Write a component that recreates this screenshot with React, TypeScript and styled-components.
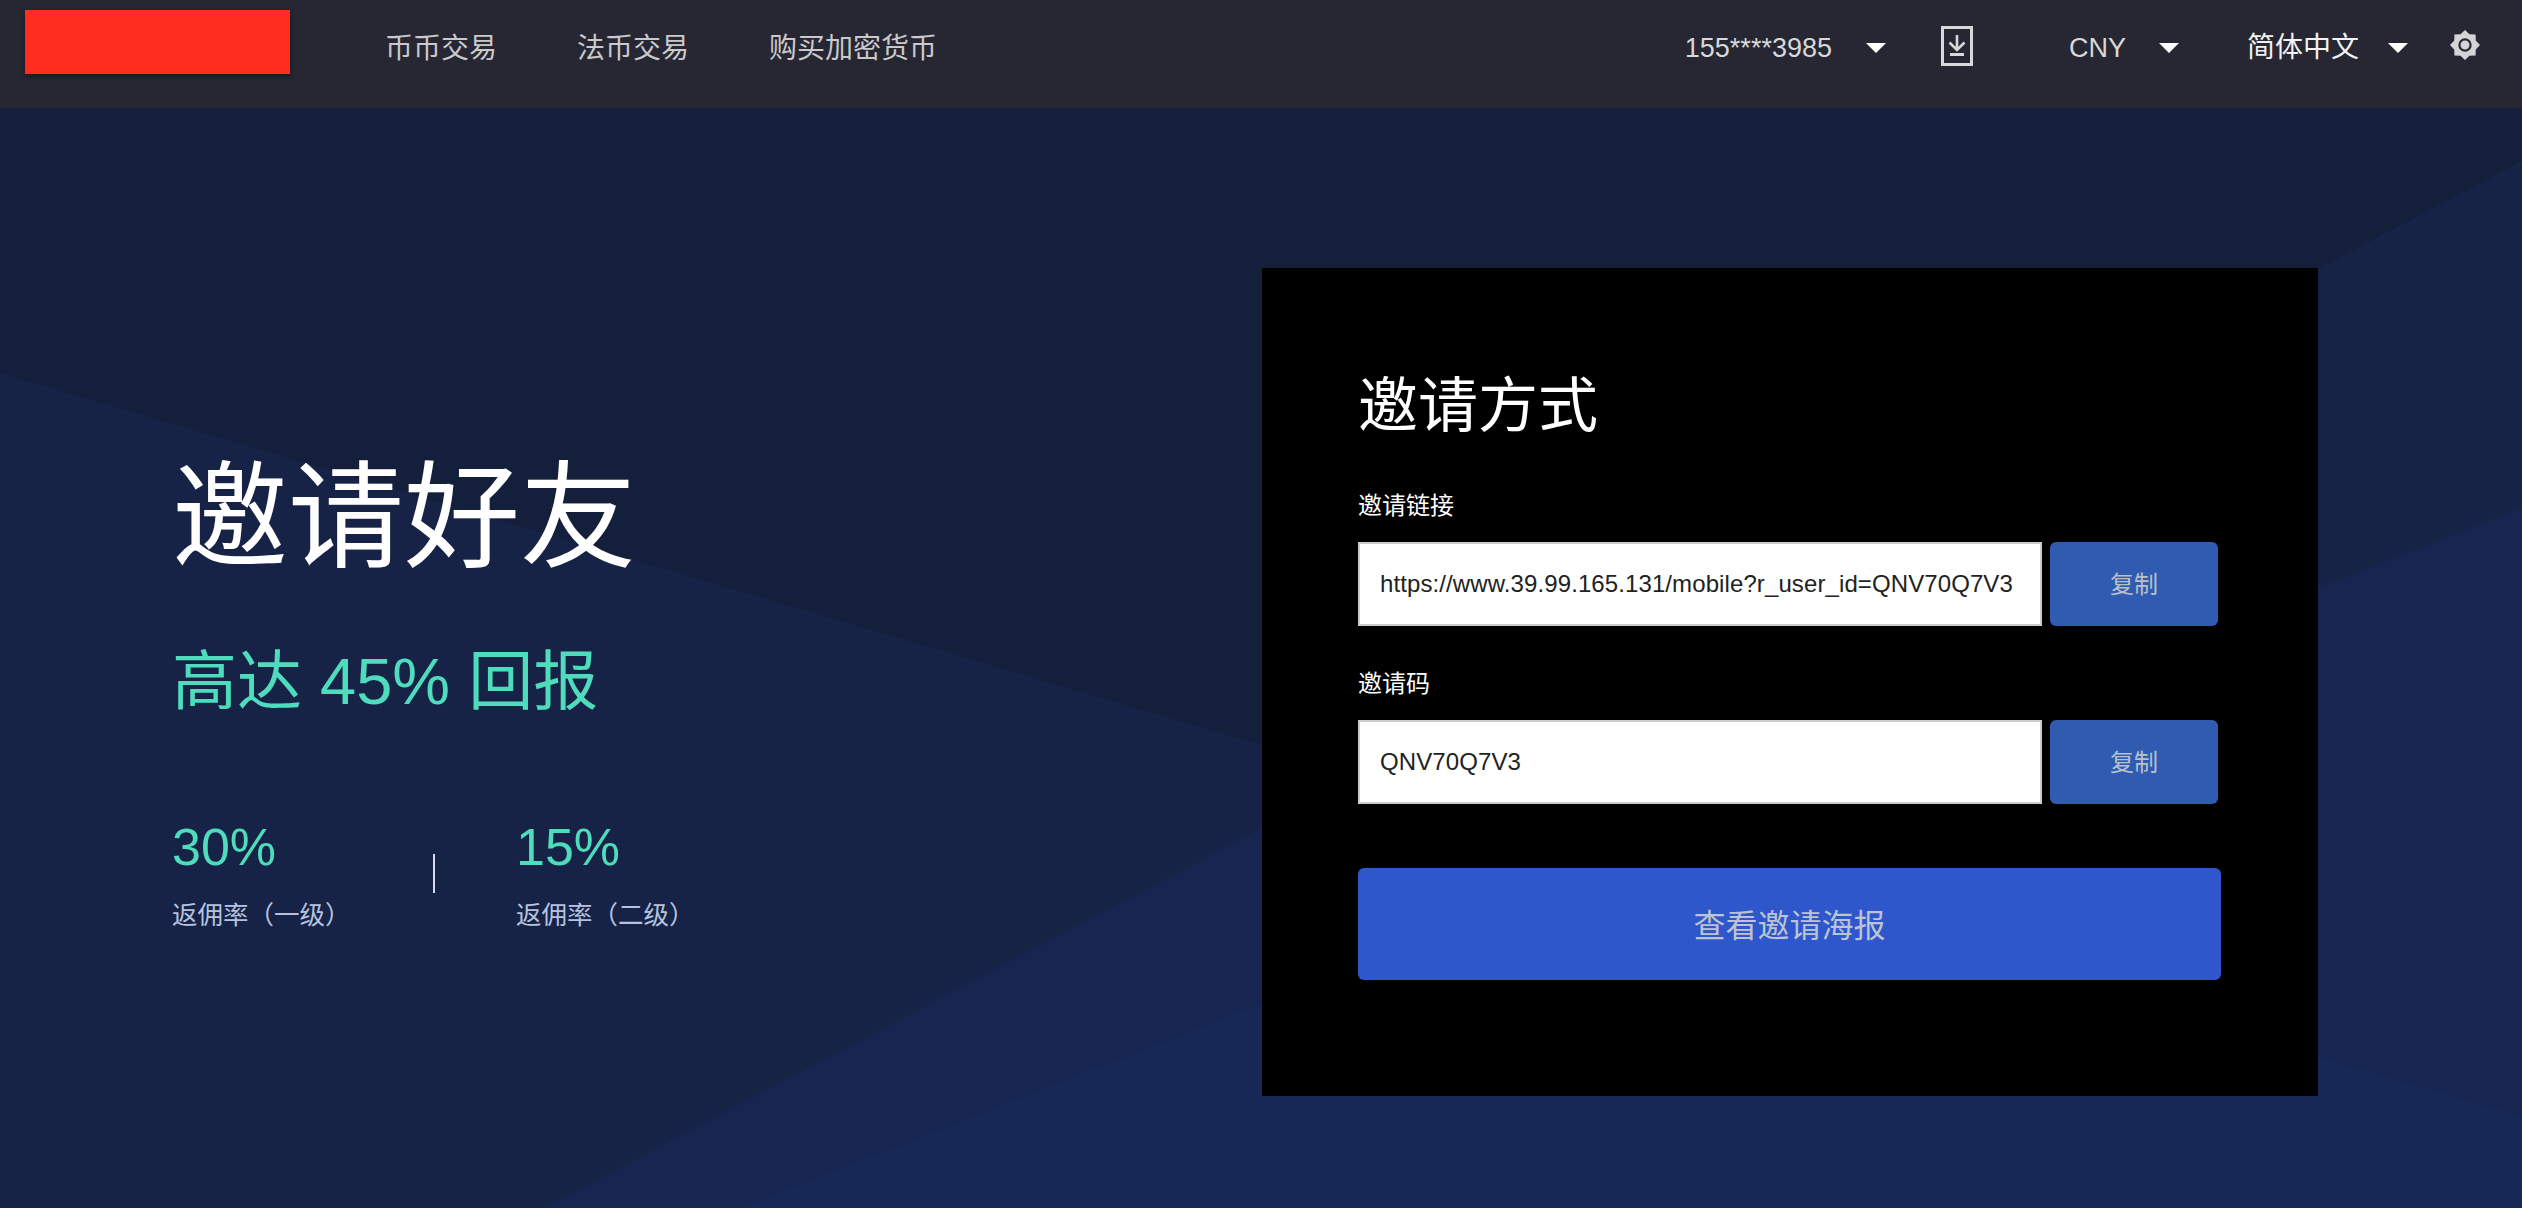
import React from "react";
import styled, { createGlobalStyle } from "styled-components";

const Global = createGlobalStyle`
  html, body { margin: 0; padding: 0; background: #141f3b; }
  body { font-family: "Liberation Sans", "Noto Sans CJK SC", sans-serif; overflow: hidden; }
  * { box-sizing: border-box; }
`;

const Page = styled.div`
  width: 2522px;
  height: 1208px;
  display: flex;
  flex-direction: column;
  overflow: hidden;
`;

const Header = styled.header`
  height: 108px;
  flex: none;
  display: flex;
  align-items: center;
  justify-content: space-between;
  padding: 0 42px 12px 25px;
  background: #262733;
`;

const HeaderLeft = styled.div`
  display: flex;
  align-items: center;
`;

const Logo = styled.div`
  width: 265px;
  height: 64px;
  margin: -12px 95px 0 0;
  background: #ff2d20;
  box-shadow: 0 2px 5px rgba(0, 0, 0, 0.45);
`;

const Nav = styled.nav`
  display: flex;
  gap: 80px;
  padding-top: 2px;
`;

const NavLink = styled.a`
  font-size: 28px;
  line-height: 32px;
  color: #c9c9cc;
`;

const HeaderRight = styled.div`
  display: flex;
  align-items: center;
`;

const Selector = styled.div<{ $after: number; $gap: number; $bright?: boolean }>`
  display: flex;
  align-items: center;
  gap: ${(p) => p.$gap}px;
  margin-right: ${(p) => p.$after}px;
  font-size: ${(p) => (p.$bright ? 28 : 27)}px;
  line-height: 32px;
  color: ${(p) => (p.$bright ? "#f2f2f2" : "#d8d8d8")};
`;

const Caret = styled.span`
  width: 0;
  height: 0;
  border-left: 10px solid transparent;
  border-right: 10px solid transparent;
  border-top: 10px solid #fff;
`;

const IconSlot = styled.svg<{ $after?: number; $up: number }>`
  display: block;
  flex: none;
  margin-right: ${(p) => p.$after ?? 0}px;
  margin-top: ${(p) => p.$up}px;
`;

const Hero = styled.main`
  position: relative;
  flex: 1;
  display: flex;
  padding: 160px 204px 112px 172px;
  background: #141f3b;
`;

const Backdrop = styled.svg`
  position: absolute;
  inset: 0;
  width: 100%;
  height: 100%;
`;

const Intro = styled.section`
  position: relative;
  flex: 1;
  padding-top: 193px;
`;

const Title = styled.h1`
  margin: 0;
  font-size: 116px;
  line-height: 115px;
  font-weight: 400;
  color: #fff;
`;

const Subtitle = styled.div`
  margin-top: 74px;
  font-size: 65px;
  line-height: 64px;
  color: #4fdcbc;
`;

const Stats = styled.div`
  margin-top: 108px;
  display: flex;
  align-items: flex-start;
`;

const Stat = styled.div<{ $width?: number }>`
  width: ${(p) => (p.$width ? `${p.$width}px` : "auto")};
  flex: none;
`;

const StatValue = styled.div`
  font-size: 52px;
  line-height: 50px;
  color: #4fdcbc;
`;

const StatLabel = styled.div`
  margin-top: 31px;
  font-size: 25.5px;
  line-height: 24px;
  color: #b6c2de;
`;

const Divider = styled.div`
  width: 2px;
  height: 39px;
  margin: 32px 81px 0 0;
  background: #d5dae6;
`;

const Card = styled.section`
  position: relative;
  flex: none;
  width: 1056px;
  height: 828px;
  padding: 104px 0 0 96px;
  background: #000;
`;

const CardTitle = styled.h2`
  margin: 0 0 52px;
  font-size: 60px;
  line-height: 70px;
  font-weight: 400;
  color: #fff;
`;

const FieldLabel = styled.div`
  font-size: 24px;
  line-height: 24px;
  color: #fff;
`;

const FieldRow = styled.div`
  display: flex;
  gap: 8px;
  margin: 24px 0 46px;
`;

const Field = styled.div`
  width: 684px;
  height: 84px;
  display: flex;
  align-items: center;
  padding: 0 20px 1px;
  border: 2px solid #ccc;
  background: #fff;
  font-size: 24px;
  letter-spacing: 0.1px;
  color: #222;
  white-space: nowrap;
  overflow: hidden;
`;

const CopyButton = styled.button`
  width: 168px;
  height: 84px;
  border: 0;
  border-radius: 6px;
  padding: 0 0 3px;
  background: #2f5bb0;
  font: inherit;
  font-size: 24px;
  color: #b9c0cc;
`;

const PosterButton = styled.button`
  display: block;
  width: 863px;
  height: 112px;
  margin-top: 64px;
  border: 0;
  border-radius: 6px;
  padding: 0 0 3px;
  background: #2d57cb;
  font: inherit;
  font-size: 32px;
  color: #bcc3d4;
`;

const sunPoints = Array.from({ length: 16 }, (_, i) => {
  const r = i % 2 === 0 ? 15 : 11.6;
  const a = (i * Math.PI) / 8 - Math.PI / 2;
  return `${(15 + r * Math.cos(a)).toFixed(2)},${(15 + r * Math.sin(a)).toFixed(2)}`;
}).join(" ");

const LINK = "https://www.39.99.165.131/mobile?r_user_id=QNV70Q7V3";
const CODE = "QNV70Q7V3";

export default function App() {
  return (
    <Page>
      <Global />
      <Header>
        <HeaderLeft>
          <Logo />
          <Nav>
            <NavLink>币币交易</NavLink>
            <NavLink>法币交易</NavLink>
            <NavLink>购买加密货币</NavLink>
          </Nav>
        </HeaderLeft>
        <HeaderRight>
          <Selector $gap={34} $after={55}>
            155****3985
            <Caret />
          </Selector>
          <IconSlot $after={96} $up={-4} width="32" height="40" viewBox="0 0 32 40" fill="none">
            <rect x="1.5" y="1.5" width="29" height="37" stroke="#d8d8d8" strokeWidth="3" />
            <path d="M16 9v15M8.5 16.5 16 24l7.5-7.5" stroke="#d8d8d8" strokeWidth="2.6" />
            <rect x="9" y="27" width="14" height="3" fill="#d8d8d8" />
          </IconSlot>
          <Selector $gap={33} $after={68}>
            CNY
            <Caret />
          </Selector>
          <Selector $gap={29} $after={42} $bright>
            简体中文
            <Caret />
          </Selector>
          <IconSlot $up={-6} width="30" height="30" viewBox="0 0 30 30">
            <polygon points={sunPoints} fill="#d4d4d6" />
            <circle cx="15" cy="15" r="5.6" fill="none" stroke="#262733" strokeWidth="2.2" />
          </IconSlot>
        </HeaderRight>
      </Header>
      <Hero>
        <Backdrop viewBox="0 108 2522 1100" preserveAspectRatio="none">
          <polygon points="0,373 2522,1117 2522,1208 0,1208" fill="#1c3068" fillOpacity="0.28" />
          <polygon points="544,1208 2522,161 2522,1208" fill="#1c3068" fillOpacity="0.28" />
          <polygon points="741,1208 2522,508 2522,1208" fill="#1c3068" fillOpacity="0.28" />
        </Backdrop>
        <Intro>
          <Title>邀请好友</Title>
          <Subtitle>高达 45% 回报</Subtitle>
          <Stats>
            <Stat $width={261}>
              <StatValue>30%</StatValue>
              <StatLabel>返佣率（一级）</StatLabel>
            </Stat>
            <Divider />
            <Stat>
              <StatValue>15%</StatValue>
              <StatLabel>返佣率（二级）</StatLabel>
            </Stat>
          </Stats>
        </Intro>
        <Card>
          <CardTitle>邀请方式</CardTitle>
          <FieldLabel>邀请链接</FieldLabel>
          <FieldRow>
            <Field>{LINK}</Field>
            <CopyButton>复制</CopyButton>
          </FieldRow>
          <FieldLabel>邀请码</FieldLabel>
          <FieldRow>
            <Field>{CODE}</Field>
            <CopyButton>复制</CopyButton>
          </FieldRow>
          <PosterButton>查看邀请海报</PosterButton>
        </Card>
      </Hero>
    </Page>
  );
}
